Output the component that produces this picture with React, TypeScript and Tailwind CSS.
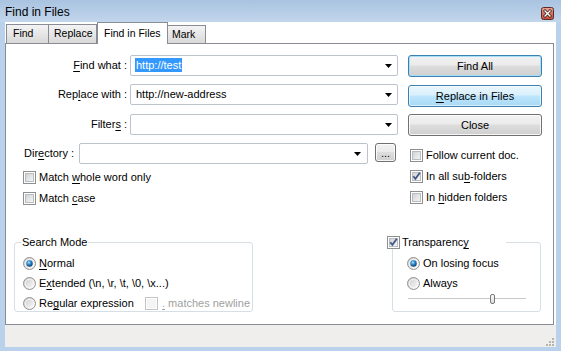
import React from "react";

function Arrow() {
  return (
    <svg width="7" height="4" viewBox="0 0 7 4" className="shrink-0">
      <path d="M0 0 H7 L3.5 4 Z" fill="#000" />
    </svg>
  );
}

function Check({ checked = false, disabled = false }: { checked?: boolean; disabled?: boolean }) {
  return (
    <svg width="13" height="13" viewBox="0 0 13 13" className="shrink-0">
      <defs>
        <linearGradient id="cbg" x1="0" y1="0" x2="1" y2="1">
          <stop offset="0" stopColor="#cdd0d4" />
          <stop offset="1" stopColor="#f7f7f7" />
        </linearGradient>
      </defs>
      <rect x="0.5" y="0.5" width="12" height="12" fill="#fff" stroke={disabled ? "#c4c4c4" : "#8e8f8f"} />
      {disabled ? (
        <rect x="2" y="2" width="9" height="9" fill="#f4f4f4" />
      ) : (
        <rect x="2.5" y="2.5" width="8" height="8" fill="url(#cbg)" stroke="#b9bcc0" />
      )}
      {checked && (
        <path d="M3.3 6.3 L5.4 8.8 L9.8 2.8" fill="none" stroke="#3f5384" strokeWidth="1.7" />
      )}
    </svg>
  );
}

function Radio({ checked = false }: { checked?: boolean }) {
  return (
    <svg width="13" height="13" viewBox="0 0 13 13" className="shrink-0">
      <defs>
        <linearGradient id="rbg" x1="0" y1="0" x2="1" y2="1">
          <stop offset="0" stopColor="#cbcbcb" />
          <stop offset="1" stopColor="#fdfdfd" />
        </linearGradient>
        <radialGradient id="rdot" cx="0.4" cy="0.35" r="0.65">
          <stop offset="0" stopColor="#b5e3fb" />
          <stop offset="0.45" stopColor="#2f8fd5" />
          <stop offset="1" stopColor="#123f6e" />
        </radialGradient>
      </defs>
      <circle cx="6.5" cy="6.5" r="6" fill="url(#rbg)" stroke="#939393" />
      <circle cx="6.5" cy="6.5" r="4.2" fill="none" stroke="#ffffff" strokeOpacity="0.6" />
      {checked && <circle cx="6.5" cy="6.5" r="3.2" fill="url(#rdot)" />}
    </svg>
  );
}

function U({ children }: { children: React.ReactNode }) {
  return <span className="underline decoration-[1px] underline-offset-[2px]">{children}</span>;
}

export default function App() {
  return (
    <div className="w-[561px] h-[351px] bg-[#b9d1ea] flex flex-col font-['Liberation_Sans',Arial,sans-serif] text-[11px] text-black overflow-hidden select-none">
      {/* Title bar */}
      <div className="h-[22px] shrink-0 flex items-start justify-between pl-[5px] pr-[7px] bg-gradient-to-b from-[#a9c3e0] to-[#c2d6ec]">
        <span className="text-[12px] leading-[14px] mt-[5px]">Find in Files</span>
        <svg width="13" height="13" viewBox="0 0 13 13" className="mt-[7px]">
          <defs>
            <linearGradient id="clb" x1="0" y1="0" x2="0" y2="1">
              <stop offset="0" stopColor="#e9a797" />
              <stop offset="0.5" stopColor="#d27262" />
              <stop offset="1" stopColor="#c04a3a" />
            </linearGradient>
          </defs>
          <rect x="0.5" y="0.5" width="12" height="12" rx="2" fill="url(#clb)" stroke="#5f2a26" />
          <path d="M4 4 L9 9 M9 4 L4 9" stroke="#3a1410" strokeWidth="2.8" strokeLinecap="square" />
          <path d="M4 4 L9 9 M9 4 L4 9" stroke="#ffffff" strokeWidth="1.4" strokeLinecap="square" />
        </svg>
      </div>

      {/* Client */}
      <div className="mx-[5px] mb-[4px] flex-1 bg-white flex flex-col">
        {/* Tabs */}
        <div className="h-[21px] shrink-0 flex items-end pl-[1px] text-[10.5px]">
          <div className="w-[43px] h-[19px] border border-b-0 border-[#898c95] bg-gradient-to-b from-[#f4f4f4] to-[#d9d9d9] flex items-center pl-[6px]">
            Find
          </div>
          <div className="w-[48px] h-[19px] border border-b-0 border-l-0 border-[#898c95] bg-gradient-to-b from-[#f4f4f4] to-[#d9d9d9] flex items-center pl-[5px]">
            Replace
          </div>
          <div className="relative z-10 w-[71px] h-[22px] -mb-px border border-b-0 border-[#898c95] bg-white flex items-center pl-[6px]">
            Find in Files
          </div>
          <div className="w-[38px] h-[18px] border border-b-0 border-l-0 border-[#898c95] bg-gradient-to-b from-[#f4f4f4] to-[#d9d9d9] flex items-center pl-[4px]">
            Mark
          </div>
        </div>

        {/* Panel */}
        <div className="h-[282px] shrink-0 mr-[2px] border border-[#898c95] bg-white flex flex-col">
          <div className="flex pt-[11px]">
            {/* Left column */}
            <div className="w-[392px] flex flex-col">
              <div className="flex h-[21px]">
                <div className="w-[121px] text-right leading-[21px]">
                  <U>F</U>ind what :
                </div>
                <div className="ml-[3px] w-[268px] h-[21px] border border-[#bcc3cd] rounded-[2px] flex items-center pl-[4px] pr-[5px]">
                  <div className="flex-1 whitespace-nowrap overflow-hidden">
                    <span className="bg-[#3399ff] text-white inline-block leading-[14px] pl-[1px] pr-[1px]">http://test</span>
                  </div>
                  <Arrow />
                </div>
              </div>
              <div className="flex h-[21px] mt-[8px]">
                <div className="w-[121px] text-right leading-[21px]">
                  Rep<U>l</U>ace with :
                </div>
                <div className="ml-[3px] w-[268px] h-[21px] border border-[#bcc3cd] rounded-[2px] flex items-center pl-[5px] pr-[5px]">
                  <div className="flex-1 whitespace-nowrap overflow-hidden">http://new-address</div>
                  <Arrow />
                </div>
              </div>
              <div className="flex h-[21px] mt-[9px]">
                <div className="w-[121px] text-right leading-[21px]">
                  Filter<U>s</U> :
                </div>
                <div className="ml-[3px] w-[268px] h-[21px] border border-[#bcc3cd] rounded-[2px] flex items-center pl-[5px] pr-[5px]">
                  <div className="flex-1" />
                  <Arrow />
                </div>
              </div>
              <div className="flex h-[21px] mt-[8px]">
                <div className="ml-[18px] w-[55px] leading-[21px] whitespace-nowrap">
                  Dir<U>e</U>ctory :
                </div>
                <div className="w-[289px] h-[21px] border border-[#bcc3cd] rounded-[2px] flex items-center pl-[5px] pr-[6px]">
                  <div className="flex-1" />
                  <Arrow />
                </div>
                <div className="ml-[7px] w-[21px] h-[19px] rounded-[3px] border border-[#707070] bg-[linear-gradient(to_bottom,#f2f2f2_0%,#ebebeb_45%,#dddddd_50%,#cfcfcf_100%)] shadow-[inset_0_0_0_1px_rgba(255,255,255,0.8)] flex items-end justify-center leading-[14px] pb-[1px]">
                  ...
                </div>
              </div>
              <div className="flex items-center h-[13px] mt-[7px] ml-[17px]">
                <Check />
                <span className="ml-[3px] leading-[13px]">
                  Match <U>w</U>hole word only
                </span>
              </div>
              <div className="flex items-center h-[13px] mt-[8px] ml-[17px]">
                <Check />
                <span className="ml-[3px] leading-[13px]">
                  Match <U>c</U>ase
                </span>
              </div>
            </div>

            {/* Right column */}
            <div className="ml-[10px] w-[134px] flex flex-col">
              <div className="h-[22px] rounded-[3px] border border-[#3c7fb1] bg-[linear-gradient(to_bottom,#f2f2f2_0%,#ebebeb_45%,#dddddd_50%,#cfcfcf_100%)] shadow-[inset_0_0_0_1px_#a8dff7] flex items-center justify-center">
                Find All
              </div>
              <div className="mt-[8px] h-[22px] rounded-[3px] border border-[#3c7fb1] bg-[linear-gradient(to_bottom,#eaf6fd_0%,#d9f0fc_45%,#bee6fd_50%,#a7d9f5_100%)] shadow-[inset_0_0_0_1px_rgba(255,255,255,0.6)] flex items-center justify-center">
                <U>R</U>eplace in Files
              </div>
              <div className="mt-[7px] h-[22px] rounded-[3px] border border-[#707070] bg-[linear-gradient(to_bottom,#f2f2f2_0%,#ebebeb_45%,#dddddd_50%,#cfcfcf_100%)] shadow-[inset_0_0_0_1px_rgba(255,255,255,0.8)] flex items-center justify-center">
                Close
              </div>
              <div className="mt-[13px] pl-[2px] flex items-center h-[13px]">
                <Check />
                <span className="ml-[3px] leading-[13px]">Follow current doc.</span>
              </div>
              <div className="mt-[8px] pl-[2px] flex items-center h-[13px]">
                <Check checked />
                <span className="ml-[3px] leading-[13px]">
                  In all su<U>b</U>-folders
                </span>
              </div>
              <div className="mt-[8px] pl-[2px] flex items-center h-[13px]">
                <Check />
                <span className="ml-[3px] leading-[13px]">
                  In <U>h</U>idden folders
                </span>
              </div>
            </div>
          </div>

          {/* Bottom groups */}
          <div className="mt-auto mb-[12px] flex items-start">
            <div className="relative ml-[8px] w-[239px] h-[70px] rounded-[3px] border border-[#d5dfe5] flex flex-col pt-[14px] pl-[8px]">
              <span className="absolute left-[6px] -top-[7px] px-[1px] bg-white leading-[13px]">Search Mode</span>
              <div className="flex items-center h-[13px]">
                <Radio checked />
                <span className="ml-[3px] leading-[13px]">
                  <U>N</U>ormal
                </span>
              </div>
              <div className="flex items-center h-[13px] mt-[7px]">
                <Radio />
                <span className="ml-[3px] leading-[13px] whitespace-nowrap">
                  E<U>x</U>tended {"(\\n, \\r, \\t, \\0, \\x...)"}
                </span>
              </div>
              <div className="flex items-center h-[13px] mt-[7px]">
                <div className="w-[122px] flex items-center">
                  <Radio />
                  <span className="ml-[3px] leading-[13px] whitespace-nowrap">
                    Re<U>g</U>ular expression
                  </span>
                </div>
                <Check disabled />
                <span className="ml-[4px] leading-[13px] text-[#a0a0a0] whitespace-nowrap">
                  <U>.</U> matches newline
                </span>
              </div>
            </div>

            <div className="relative ml-[139px] w-[149px] h-[70px] rounded-[3px] border border-[#d5dfe5] flex flex-col pt-[14px] pl-[14px]">
              <div className="absolute -left-[6px] -top-[7px] w-[119px] h-[13px] bg-white flex items-center">
                <Check checked />
                <span className="ml-[2px] leading-[13px]">
                  Transparenc<U>y</U>
                </span>
              </div>
              <div className="flex items-center h-[13px]">
                <Radio checked />
                <span className="ml-[3px] leading-[13px]">On losing focus</span>
              </div>
              <div className="flex items-center h-[13px] mt-[7px]">
                <Radio />
                <span className="ml-[3px] leading-[13px]">Always</span>
              </div>
              <div className="relative mt-[4px] ml-[1px] w-[118px] h-[10px]">
                <div className="absolute left-0 right-0 top-[4px] h-[2px] bg-[#c8c8c8] border-b border-white" />
                <div className="absolute left-[82px] top-0 w-[5px] h-[10px] rounded-[2px] border border-[#7a7a7a] bg-gradient-to-b from-[#fafafa] to-[#dcdcdc]" />
              </div>
            </div>
          </div>
        </div>

        {/* Status bar */}
        <div className="relative flex-1 bg-[#f0eeed]">
          <svg width="9" height="9" viewBox="0 0 9 9" className="absolute right-[2px] bottom-[1px]">
            <g fill="#b7b4b0">
              <rect x="7" y="1" width="2" height="2" />
              <rect x="4" y="4" width="2" height="2" />
              <rect x="7" y="4" width="2" height="2" />
              <rect x="1" y="7" width="2" height="2" />
              <rect x="4" y="7" width="2" height="2" />
              <rect x="7" y="7" width="2" height="2" />
            </g>
          </svg>
        </div>
      </div>
    </div>
  );
}
